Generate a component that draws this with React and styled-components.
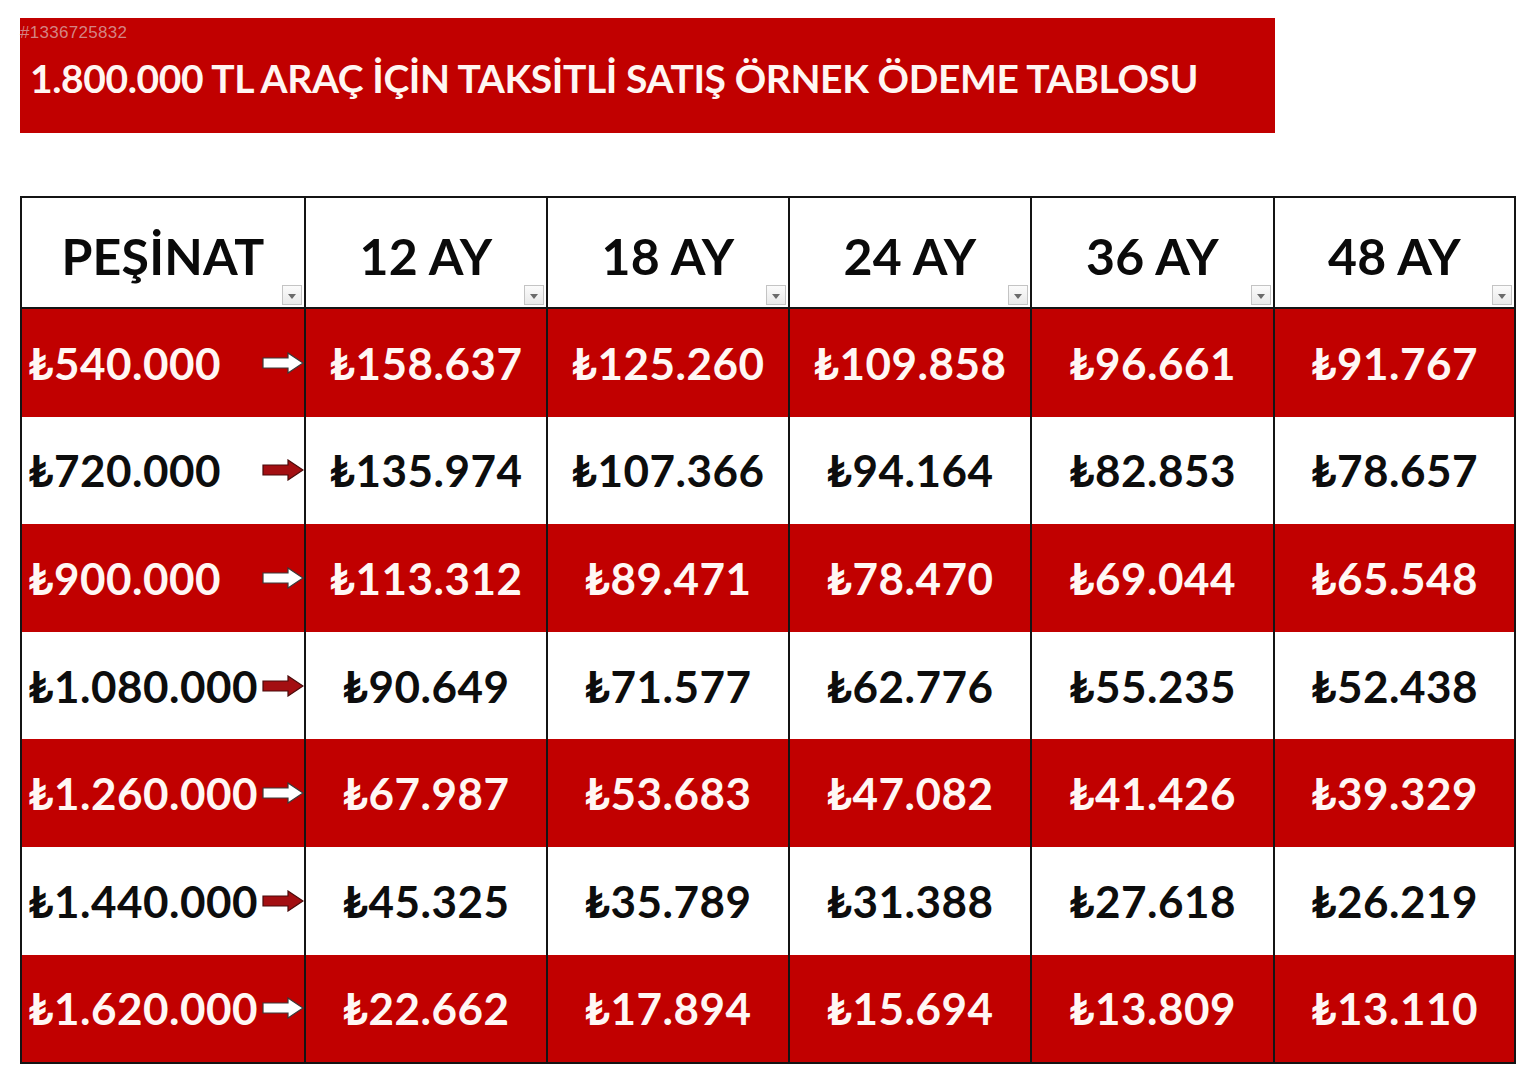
import React from "react";
import styled, { createGlobalStyle } from "styled-components";

const Global = createGlobalStyle`
  html, body { margin: 0; padding: 0; background: #ffffff; }
  body { font-family: "Lato", "Noto Sans", "DejaVu Sans", sans-serif; }
`;

const RED = "#c10000";

const Page = styled.div`
  width: 1537px;
  height: 1080px;
  padding: 18px 0 0 20px;
  box-sizing: border-box;
  display: flex;
  flex-direction: column;
  align-items: flex-start;
`;

const TitleBar = styled.div`
  position: relative;
  width: 1255px;
  height: 115px;
  background: ${RED};
  box-sizing: border-box;
  display: flex;
  align-items: center;
  padding: 4px 0 0 10px;
`;

const AdNo = styled.span`
  position: absolute;
  left: 0;
  top: 5px;
  font-family: "Liberation Sans", "DejaVu Sans", sans-serif;
  font-size: 17px;
  color: rgba(214, 150, 150, 0.9);
  letter-spacing: 0.3px;
`;

const Title = styled.h1`
  margin: 0;
  font-family: "Lato", "Noto Sans", sans-serif;
  font-weight: 700;
  font-size: 39px;
  letter-spacing: -0.4px;
  color: #fff6f2;
  white-space: nowrap;
`;

const Table = styled.div`
  margin-top: 63px;
  border: 2px solid #141414;
  display: grid;
  grid-template-columns: 282px 242px 242px 242px 243px 241px;
  grid-template-rows: 111px repeat(7, 107.6px);
  background: #fff;
`;

const HeadCell = styled.div`
  position: relative;
  display: flex;
  align-items: center;
  justify-content: center;
  box-sizing: border-box;
  border-left: ${(p) => (p.$first ? "none" : "2px solid #141414")};
  border-bottom: 2px solid #141414;
  padding-top: 6px;
  font-family: "Lato", "Noto Sans", sans-serif;
  font-weight: 700;
  font-size: 50px;
  letter-spacing: 0.2px;
  color: #0a0a0a;
`;

const Dropdown = styled.span`
  position: absolute;
  right: 2px;
  bottom: 2px;
  width: 20px;
  height: 20px;
  box-sizing: border-box;
  border: 1px solid #c4c4c4;
  background: linear-gradient(#fbfbfb, #e9e9e9);
  display: flex;
  align-items: center;
  justify-content: center;
  &::after {
    content: "";
    border-left: 4px solid transparent;
    border-right: 4px solid transparent;
    border-top: 5px solid #6a6a6a;
    margin-top: 2px;
  }
`;

const Cell = styled.div`
  display: flex;
  align-items: center;
  justify-content: ${(p) => (p.$first ? "space-between" : "center")};
  box-sizing: border-box;
  padding: ${(p) => (p.$first ? "0 0 0 6px" : "0")};
  border-left: ${(p) => (p.$first ? "none" : "2px solid #141414")};
  background: ${(p) => (p.$red ? RED : "#ffffff")};
  color: ${(p) => (p.$red ? "#fff7f4" : "#0d0d0d")};
  font-family: "Lato", "Noto Sans", "DejaVu Sans", sans-serif;
  font-weight: 700;
  font-size: 44px;
  letter-spacing: 0.5px;
  white-space: nowrap;
`;

const Amount = styled.span`
  display: block;
`;

const Arrow = ({ red }) => (
  <svg width="42" height="22" viewBox="0 0 42 22" style={{ flexShrink: 0 }}>
    <path
      d="M1 6 H26 V1 L41 11 L26 21 V16 H1 Z"
      fill={red ? "#ffffff" : "#a30f12"}
      stroke={red ? "#3a3a3a" : "#4a0a0a"}
      strokeWidth="1.2"
      strokeLinejoin="miter"
    />
  </svg>
);

const headers = ["PEŞİNAT", "12 AY", "18 AY", "24 AY", "36 AY", "48 AY"];

const rows = [
  ["₺540.000", "₺158.637", "₺125.260", "₺109.858", "₺96.661", "₺91.767"],
  ["₺720.000", "₺135.974", "₺107.366", "₺94.164", "₺82.853", "₺78.657"],
  ["₺900.000", "₺113.312", "₺89.471", "₺78.470", "₺69.044", "₺65.548"],
  ["₺1.080.000", "₺90.649", "₺71.577", "₺62.776", "₺55.235", "₺52.438"],
  ["₺1.260.000", "₺67.987", "₺53.683", "₺47.082", "₺41.426", "₺39.329"],
  ["₺1.440.000", "₺45.325", "₺35.789", "₺31.388", "₺27.618", "₺26.219"],
  ["₺1.620.000", "₺22.662", "₺17.894", "₺15.694", "₺13.809", "₺13.110"],
];

export default function App() {
  return (
    <>
      <Global />
      <Page>
        <TitleBar>
          <AdNo>#1336725832</AdNo>
          <Title>1.800.000 TL ARAÇ İÇİN TAKSİTLİ SATIŞ ÖRNEK ÖDEME TABLOSU</Title>
        </TitleBar>
        <Table>
          {headers.map((h, i) => (
            <HeadCell key={h} $first={i === 0}>
              {h}
              <Dropdown />
            </HeadCell>
          ))}
          {rows.map((r, ri) => {
            const red = ri % 2 === 0;
            return r.map((v, ci) => (
              <Cell key={`${ri}-${ci}`} $first={ci === 0} $red={red}>
                <Amount>{v}</Amount>
                {ci === 0 && <Arrow red={red} />}
              </Cell>
            ));
          })}
        </Table>
      </Page>
    </>
  );
}
